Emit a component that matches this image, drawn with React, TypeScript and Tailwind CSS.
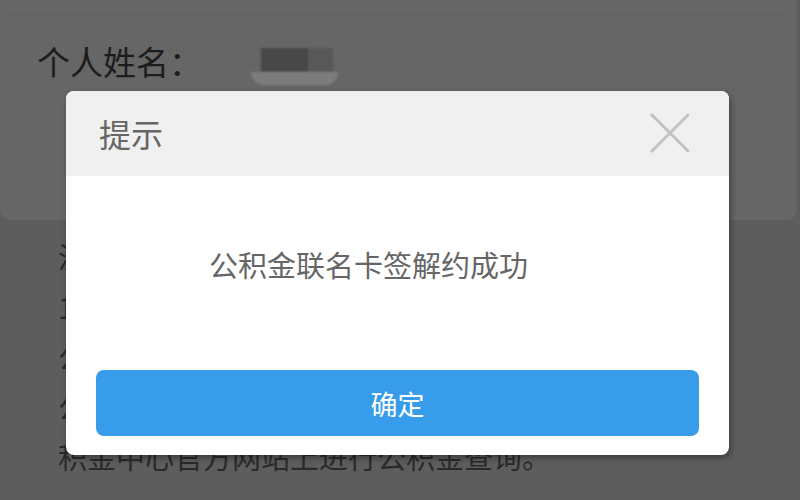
const font = { fontFamily: '"Noto Sans CJK SC", "Noto Sans", sans-serif' };

const notes = [
  "温馨提示：公积金联名卡签约成功后，",
  "1、您可以使用联名卡办理公积金相关业务；",
  "公积金缴存信息将同步至联名卡账户；",
  "公积金账户余额可登录住房公",
  "积金中心官方网站上进行公积金查询。",
];

function CloseIcon() {
  return (
    <svg width="42" height="42" viewBox="0 0 42 42" fill="none">
      <path d="M3 3 L39 39 M39 3 L3 39" stroke="#c2c2c2" strokeWidth="3" strokeLinecap="round" />
    </svg>
  );
}

export default function App() {
  return (
    <div
      className="relative w-[800px] h-[500px] overflow-hidden bg-[#5d5d5d]"
      style={font}
    >
      {/* page behind the mask */}
      <div className="h-[220px] mr-[3px] rounded-b-[10px] bg-[#666666] flex flex-col">
        <div className="h-[15px] mx-[10px] border-b border-[#5f5f5f]" />
        <div className="flex items-center h-[100px] -mt-[2px] pl-[37px] pb-[4px]">
          <span className="text-[33px] leading-none text-[#1c1c1c] w-[219px]">个人姓名：</span>
          <div className="relative flex flex-col items-center mt-[10px]">
            <div className="flex">
              <div className="w-[48px] h-[24px] bg-[#484848] blur-[1px]" />
              <div className="w-[24px] h-[24px] bg-[#585858] blur-[1px]" />
            </div>
            <div className="w-[87px] h-[13px] rounded-b-[30px] bg-[#7c7c7c] blur-[1px] ml-[-5px]" />
          </div>
        </div>
      </div>
      <div className="mt-[11px] pl-[58px] text-[29px] leading-[50px] text-[#2a2a2a] whitespace-nowrap">
        {notes.map((line) => (
          <p key={line}>{line}</p>
        ))}
      </div>

      {/* dialog */}
      <div className="absolute left-[66px] top-[91px] w-[663px] h-[364px] rounded-[8px] bg-white overflow-hidden shadow-[2px_3px_6px_rgba(0,0,0,0.35)] flex flex-col">
        <div className="h-[85px] bg-[#f0f0f0] flex items-center justify-between pl-[33px] pr-[38px] pb-[2px]">
          <span className="text-[32px] leading-none text-[#666666]">提示</span>
          <CloseIcon />
        </div>
        <div className="h-[115px] flex items-end pl-[143px] pb-[12px]">
          <span className="text-[29px] leading-none text-[#666666]">公积金联名卡签解约成功</span>
        </div>
        <div className="px-[30px] pt-[79px]">
          <button className="w-full h-[66px] rounded-[8px] bg-[#379ce9] text-white text-[27px] leading-none flex items-center justify-center">
            确定
          </button>
        </div>
      </div>
    </div>
  );
}
